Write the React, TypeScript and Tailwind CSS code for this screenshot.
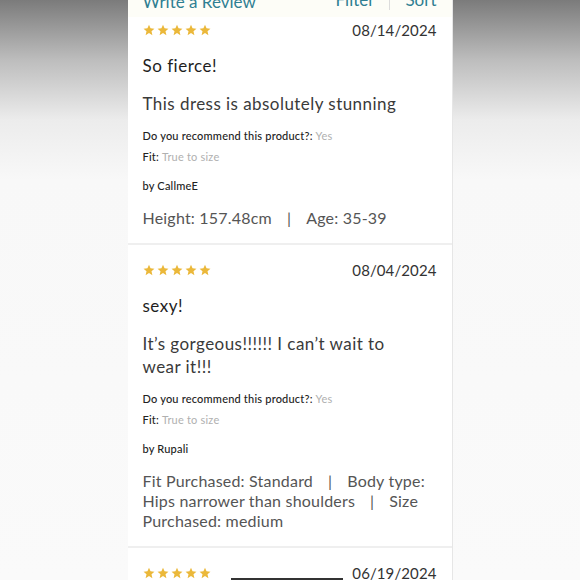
import React from "react";

const Stars = () => (
  <div className="flex gap-[2px]">
    {[0, 1, 2, 3, 4].map((i) => (
      <svg key={i} width="12" height="12" viewBox="0 0 24 24">
        <path d="M12 1.5l3.1 7.2 7.8.7-5.9 5.2 1.8 7.7L12 18.2l-6.8 4.1 1.8-7.7-5.9-5.2 7.8-.7z" fill="#ebb83a" />
      </svg>
    ))}
  </div>
);

type R = {
  date: string;
  title: string;
  body: React.ReactNode;
  by: string;
  meta: React.ReactNode;
  first?: boolean;
};

const Review = ({ date, title, body, by, meta, first }: R) => (
  <div className={`px-[15px] pb-[15px] border-b-2 border-[#efefef] ${first ? "pt-[3px]" : "pt-[15px]"}`}>
    <div className="flex items-center justify-between h-[20px]">
      <Stars />
      <span className="text-[15px] text-[#333] tracking-[0.1px]">{date}</span>
    </div>
    <div className="mt-[14px] text-[17px] text-[#1e1e1e] leading-[24px] tracking-[0.5px]">{title}</div>
    <div className="mt-[14px] max-w-[282px] text-[17px] text-[#3a3a3a] leading-[23px] tracking-[0.45px]">{body}</div>
    <div className="mt-[13px] text-[11px] text-[#222] font-medium leading-[16px] tracking-[0.2px]">
      Do you recommend this product?: <span className="text-[#b0b0b0] font-normal">Yes</span>
    </div>
    <div className="mt-[5px] text-[11px] text-[#222] font-medium leading-[16px] tracking-[0.2px]">
      Fit: <span className="text-[#b0b0b0] font-normal">True to size</span>
    </div>
    <div className="mt-[13px] text-[11px] text-[#222] font-medium leading-[16px] tracking-[0.2px]">{by}</div>
    <div className="mt-[14px] text-[16px] text-[#555] leading-[20px] tracking-[0.2px]">{meta}</div>
  </div>
);

export default function App() {
  return (
    <div
      className="w-[580px] h-[580px] overflow-hidden flex justify-center bg-[linear-gradient(to_bottom,#7b7b7b_0px,#bdbdbd_60px,#ececec_120px,#f8f8f8_180px,#fafafa_580px)]"
      style={{ fontFamily: "Lato, 'Open Sans', sans-serif" }}
    >
      <div className="w-[325px] h-[580px] bg-white border-r border-[#e6e6e6] flex flex-col">
        <div className="h-[17px] bg-[#fdfdf7] px-[15px] flex justify-between items-end overflow-hidden shrink-0">
          <span className="text-[17px] text-[#2f7f92] leading-[17px] translate-y-[-7px]">Write a Review</span>
          <div className="flex items-center text-[17px] text-[#2f7f92] leading-[17px] translate-y-[-7px]">
            <span>Filter</span>
            <span className="mx-[15px] w-px h-[22px] bg-[#dcdcdc]"></span>
            <span>Sort</span>
          </div>
        </div>
        <div>
          <Review
            first
            date="08/14/2024"
            title="So fierce!"
            body="This dress is absolutely stunning"
            by="by CallmeE"
            meta={
              <>
                Height: 157.48cm<span className="mx-[15px]">|</span>Age: 35-39
              </>
            }
          />
          <Review
            date="08/04/2024"
            title="sexy!"
            body="It’s gorgeous!!!!!! I can’t wait to wear it!!!"
            by="by Rupali"
            meta={
              <>
                Fit Purchased: Standard<span className="mx-[15px]">|</span>Body type: Hips narrower than shoulders
                <span className="mx-[15px]">|</span>Size Purchased: medium
              </>
            }
          />
          <div className="px-[15px] pt-[15px]">
            <div className="flex items-center justify-between h-[20px]">
              <Stars />
              <div className="flex items-center">
                <span className="w-[112px] h-[1.5px] bg-[#333] mt-[12px] mr-[9px]"></span>
                <span className="text-[15px] text-[#333] tracking-[0.1px]">06/19/2024</span>
              </div>
            </div>
          </div>
        </div>
      </div>
    </div>
  );
}
